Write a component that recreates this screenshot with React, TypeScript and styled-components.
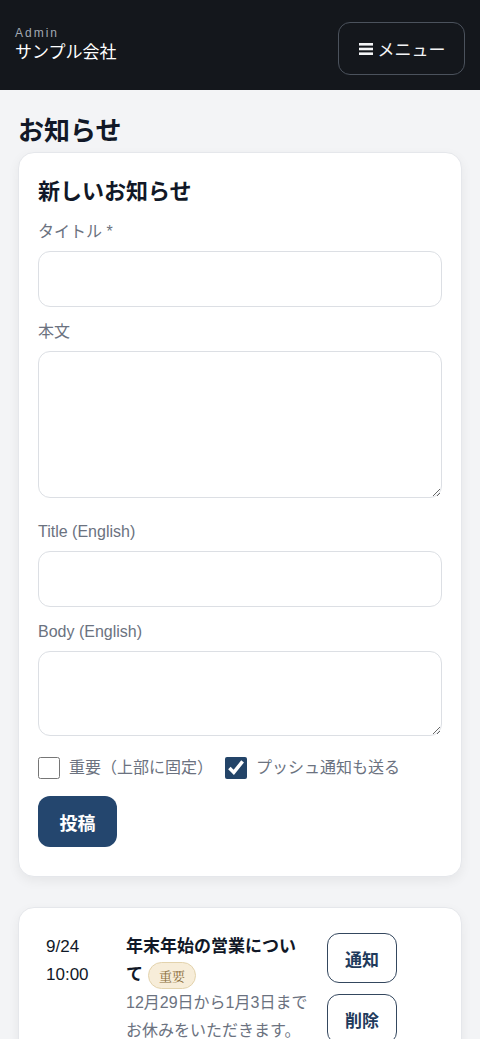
import React from 'react'
import styled, { createGlobalStyle } from 'styled-components';

const GlobalStyle = createGlobalStyle`
body {
  margin: 0;
  background: #f3f4f6;
  font-family: "Liberation Sans", "Noto Sans CJK JP", sans-serif;
  color: #111827;
}
* { box-sizing: border-box; }
`

const Header = styled.header`
height: 90px;
background: #14171c;
display: flex;
align-items: flex-start;
justify-content: space-between;
padding: 22px 15px 0;
`

const Brand = styled.div`
display: flex;
flex-flow: column;
padding-top: 3px;
`

const BrandSmall = styled.span`
font-size: 12px;
letter-spacing: 2px;
color: #a3a9b3;
line-height: 16px;
`

const BrandName = styled.span`
font-size: 17px;
color: #fff;
line-height: 24px;
`

const MenuButton = styled.button`
width: 127px;
height: 53px;
border: 1px solid #4b525c;
border-radius: 12px;
background: transparent;
color: #f3f4f6;
font-family: inherit;
font-size: 17px;
display: flex;
align-items: center;
justify-content: center;
gap: 4px;
`

const Main = styled.main`
padding: 18px 18px 0;
`

const PageTitle = styled.h1`
margin: 8px 0 6px;
font-size: 26px;
line-height: 30px;
font-weight: 700;
`

const Card = styled.section`
background: #fff;
border: 1px solid #e5e7eb;
border-radius: 16px;
box-shadow: 0 4px 12px rgba(0, 0, 0, .06);
padding: 23px 19px 29px;
margin-bottom: 30px;
`

const CardTitle = styled.h2`
margin: 0 0 14px;
font-size: 22px;
line-height: 32px;
font-weight: 700;
`

const Field = styled.label<{mb?: number}>`
display: flex;
flex-flow: column;
gap: 9px;
margin-bottom: ${({mb}) => mb ?? 15}px;
`

const Label = styled.span`
font-size: 16px;
line-height: 20px;
color: #6b7280;
`

const Input = styled.input`
height: 56px;
border: 1px solid #dcdfe4;
border-radius: 12px;
font-size: 16px;
padding: 0 14px;
`

const TextArea = styled.textarea<{h: number}>`
height: ${({h}) => h}px;
border: 1px solid #dcdfe4;
border-radius: 12px;
font-size: 16px;
padding: 12px 14px;
font-family: inherit;
`

const Checks = styled.div`
display: flex;
align-items: center;
gap: 12px;
margin: 0 0 17px;
`

const Check = styled.label`
display: flex;
align-items: center;
gap: 9px;
font-size: 16px;
line-height: 22px;
color: #6b7280;
`

const Box = styled.input`
width: 22px;
height: 22px;
margin: 0;
accent-color: #234468;
`

const PostButton = styled.button`
width: 79px;
height: 51px;
border: none;
border-radius: 12px;
background: #24466e;
color: #fff;
font-family: inherit;
font-size: 18px;
font-weight: 700;
`

const ItemCard = styled.article`
background: #fff;
border: 1px solid #e5e7eb;
border-radius: 16px;
box-shadow: 0 4px 12px rgba(0, 0, 0, .06);
padding: 25px 64px 25px 27px;
display: grid;
grid-template-columns: 80px 1fr 70px;
`

const When = styled.div`
font-size: 17px;
line-height: 28px;
color: #111827;
`

const ItemBody = styled.div`
padding-right: 16px;
`

const ItemTitle = styled.h3`
margin: 0;
font-size: 17px;
line-height: 28px;
font-weight: 700;
`

const Badge = styled.span`
display: inline-block;
margin-left: 5px;
padding: 0 10px;
height: 27px;
line-height: 25px;
border: 1px solid #e3d3ad;
border-radius: 14px;
background: #f7edd9;
color: #8a6d3b;
font-family: "Noto Serif CJK JP", serif;
font-size: 13px;
font-weight: 400;
vertical-align: middle;
`

const ItemText = styled.p`
margin: 0;
font-size: 16px;
line-height: 28px;
color: #6b7280;
`

const Actions = styled.div`
display: flex;
flex-flow: column;
gap: 11px;
`

const ActionButton = styled.button`
width: 70px;
height: 50px;
border: 1.5px solid #34475e;
border-radius: 12px;
background: #fff;
color: #1f3b5c;
font-family: inherit;
font-size: 17px;
font-weight: 700;
`

const MenuIcon = () => (
  <svg width="16" height="16" viewBox="0 0 16 16">
    <rect x="1" y="2" width="14" height="2.6" fill="#f3f4f6" />
    <rect x="1" y="6.7" width="14" height="2.6" fill="#f3f4f6" />
    <rect x="1" y="11.4" width="14" height="2.6" fill="#f3f4f6" />
  </svg>
)

const App = () => (
  <>
    <GlobalStyle />
    <Header>
      <Brand>
        <BrandSmall>Admin</BrandSmall>
        <BrandName>サンプル会社</BrandName>
      </Brand>
      <MenuButton><MenuIcon />メニュー</MenuButton>
    </Header>
    <Main>
      <PageTitle>お知らせ</PageTitle>
      <Card>
        <CardTitle>新しいお知らせ</CardTitle>
        <Field>
          <Label>タイトル *</Label>
          <Input />
        </Field>
        <Field mb={24}>
          <Label>本文</Label>
          <TextArea h={147} />
        </Field>
        <Field>
          <Label>Title (English)</Label>
          <Input />
        </Field>
        <Field mb={21}>
          <Label>Body (English)</Label>
          <TextArea h={85} />
        </Field>
        <Checks>
          <Check><Box type="checkbox" />重要（上部に固定）</Check>
          <Check><Box type="checkbox" defaultChecked />プッシュ通知も送る</Check>
        </Checks>
        <PostButton>投稿</PostButton>
      </Card>
      <ItemCard>
        <When>9/24<br />10:00</When>
        <ItemBody>
          <ItemTitle>年末年始の営業について<Badge>重要</Badge></ItemTitle>
          <ItemText>12月29日から1月3日までお休みをいただきます。</ItemText>
        </ItemBody>
        <Actions>
          <ActionButton>通知</ActionButton>
          <ActionButton>削除</ActionButton>
        </Actions>
      </ItemCard>
    </Main>
  </>
)

export default App;
